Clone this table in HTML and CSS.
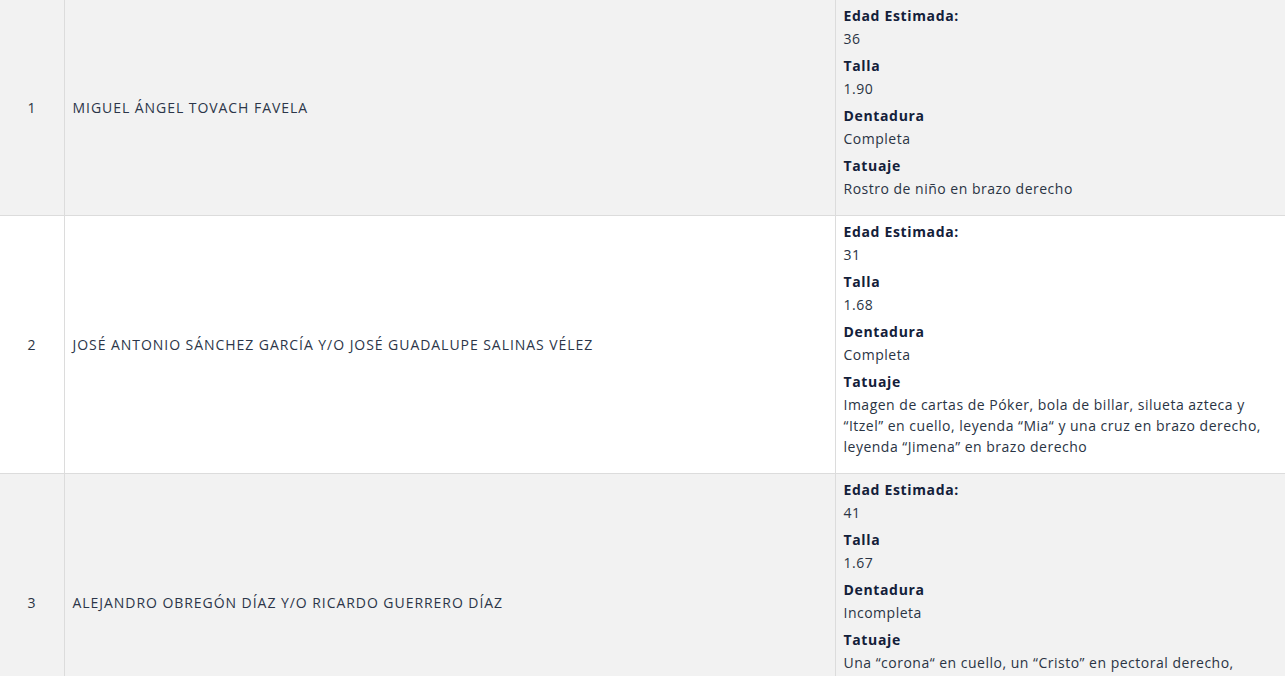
FILE: index.html
```html
<!DOCTYPE html>
<html lang="es">
<head>
<meta charset="utf-8">
<title>Personas</title>
<link rel="stylesheet" href="styles.css">
</head>
<body>
<table class="tbl">
  <colgroup>
    <col class="c-num">
    <col class="c-name">
    <col class="c-desc">
  </colgroup>
  <tbody>
    <tr class="odd">
      <td class="num">1</td>
      <td class="name">MIGUEL ÁNGEL TOVACH FAVELA</td>
      <td class="desc">
        <p class="lbl">Edad Estimada:</p>
        <p class="val">36</p>
        <p class="lbl">Talla</p>
        <p class="val">1.90</p>
        <p class="lbl">Dentadura</p>
        <p class="val">Completa</p>
        <p class="lbl">Tatuaje</p>
        <p class="val">Rostro de niño en brazo derecho</p>
      </td>
    </tr>
    <tr class="even">
      <td class="num">2</td>
      <td class="name">JOSÉ ANTONIO SÁNCHEZ GARCÍA Y/O JOSÉ GUADALUPE SALINAS VÉLEZ</td>
      <td class="desc">
        <p class="lbl">Edad Estimada:</p>
        <p class="val">31</p>
        <p class="lbl">Talla</p>
        <p class="val">1.68</p>
        <p class="lbl">Dentadura</p>
        <p class="val">Completa</p>
        <p class="lbl">Tatuaje</p>
        <p class="val">Imagen de cartas de Póker, bola de billar, silueta azteca y “Itzel” en cuello, leyenda “Mia“ y una cruz en brazo derecho, leyenda “Jimena” en brazo derecho</p>
      </td>
    </tr>
    <tr class="odd">
      <td class="num">3</td>
      <td class="name">ALEJANDRO OBREGÓN DÍAZ Y/O RICARDO GUERRERO DÍAZ</td>
      <td class="desc">
        <p class="lbl">Edad Estimada:</p>
        <p class="val">41</p>
        <p class="lbl">Talla</p>
        <p class="val">1.67</p>
        <p class="lbl">Dentadura</p>
        <p class="val">Incompleta</p>
        <p class="lbl">Tatuaje</p>
        <p class="val">Una “corona“ en cuello, un “Cristo” en pectoral derecho, leyenda “Gaby” y una rosa en brazo izquierdo, estrellas en la espalda y leyenda “Familia” en brazo derecho</p>
      </td>
    </tr>
  </tbody>
</table>
</body>
</html>
```

FILE: styles.css
```css
html, body {
  margin: 0;
  padding: 0;
  background: #ffffff;
}
body {
  font-family: "Open Sans", "Liberation Sans", sans-serif;
  font-size: 14px;
  line-height: 21px;
  color: #2a3444;
  letter-spacing: 0.5px;
}
.tbl {
  width: 1285px;
  border-collapse: collapse;
  table-layout: fixed;
}
.c-num { width: 64px; }
.c-name { width: 771px; }
.c-desc { width: 450px; }
.tbl td {
  border-left: 1px solid #dcdcdc;
  border-bottom: 1px solid #dcdcdc;
  padding: 8px;
  vertical-align: middle;
}
.tbl td:first-child {
  border-left: none;
}
.odd { background: #f2f2f2; }
.even { background: #ffffff; }
.num {
  text-align: center;
}
.name {
  text-transform: uppercase;
  letter-spacing: 0.95px;
  color: #2c3649;
}
.tbl td.desc {
  vertical-align: top;
  padding: 5px 8px 10px 8px;
}
.lbl {
  margin: 0 0 2px 0;
  font-weight: 700;
  color: #13203a;
  letter-spacing: 0.65px;
}
.val {
  margin: 0 0 6px 0;
}
```
